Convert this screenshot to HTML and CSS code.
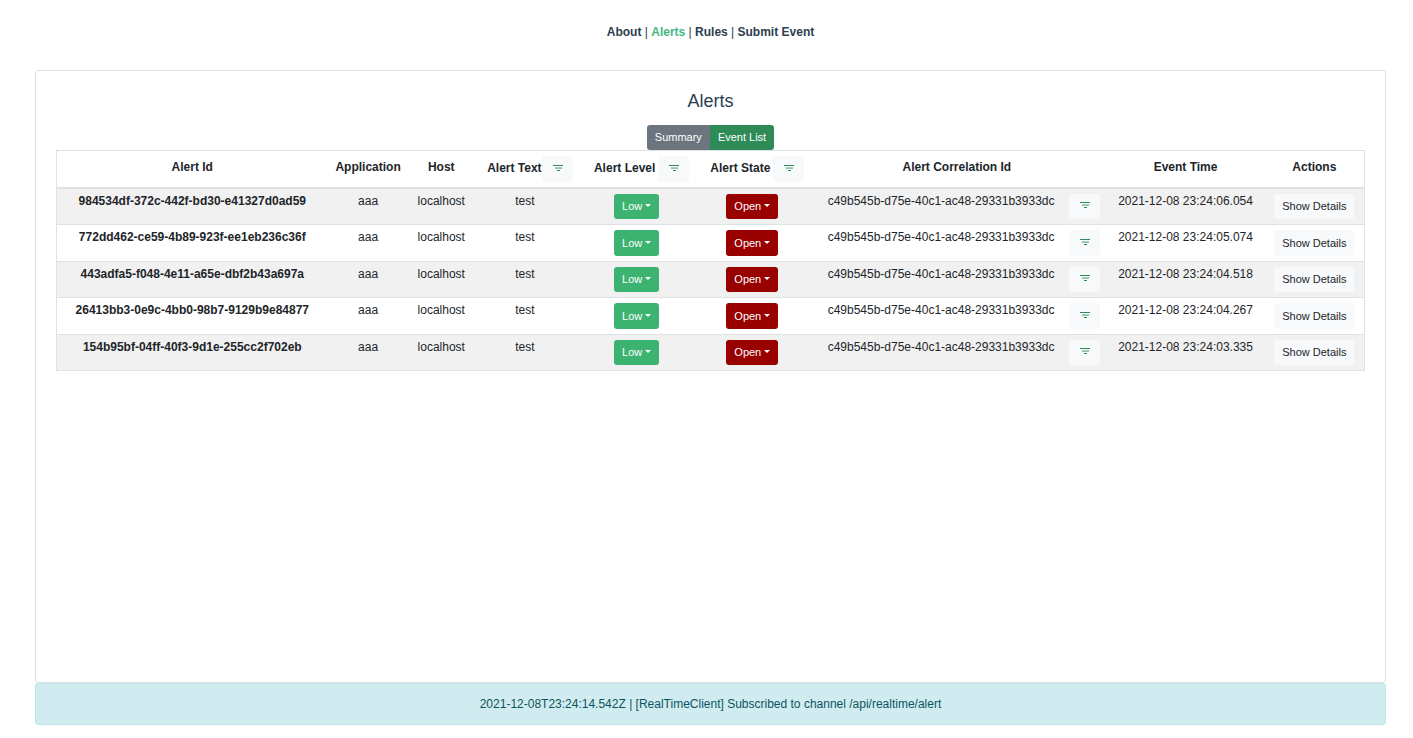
FILE: index.html
```html
<!DOCTYPE html>
<html lang="en">
<head>
<meta charset="utf-8">
<title>Alerts</title>
<link rel="stylesheet" href="styles.css">
</head>
<body>
<svg width="0" height="0" class="defs" aria-hidden="true">
  <symbol id="filter" viewBox="0 0 10 6">
    <path d="M0 0h10v1H0z"/>
    <path d="M2 2h7v1H2z" opacity=".4"/>
    <path d="M2 3h7v1H2z" opacity=".5"/>
    <path d="M4 5h3v1H4z"/>
  </symbol>
</svg>
<nav class="nav">
  <a href="#about">About</a> | <a href="#alerts" class="active">Alerts</a> | <a href="#rules">Rules</a> | <a href="#submit">Submit Event</a>
</nav>
<main class="card">
  <h1 class="title">Alerts</h1>
  <div class="group">
    <button class="btn summary" type="button">Summary</button><button class="btn list" type="button">Event List</button>
  </div>
  <table class="alerts">
    <colgroup>
      <col class="c-id"><col class="c-app"><col class="c-host"><col class="c-text"><col class="c-level"><col class="c-state"><col class="c-corr"><col class="c-time"><col class="c-act">
    </colgroup>
    <thead>
      <tr>
        <th scope="col">Alert Id</th>
        <th scope="col">Application</th>
        <th scope="col">Host</th>
        <th scope="col"><div class="filtered tight">Alert Text<button class="btn light" type="button" aria-label="Filter by text"><svg class="icon"><use href="#filter"/></svg></button></div></th>
        <th scope="col"><div class="filtered">Alert Level<button class="btn light" type="button" aria-label="Filter by level"><svg class="icon"><use href="#filter"/></svg></button></div></th>
        <th scope="col"><div class="filtered">Alert State<button class="btn light" type="button" aria-label="Filter by state"><svg class="icon"><use href="#filter"/></svg></button></div></th>
        <th scope="col">Alert Correlation Id</th>
        <th scope="col">Event Time</th>
        <th scope="col">Actions</th>
      </tr>
    </thead>
    <tbody>
      <tr>
        <th scope="row">984534df-372c-442f-bd30-e41327d0ad59</th><td>aaa</td><td>localhost</td><td>test</td>
        <td><button class="btn low" type="button">Low</button></td>
        <td><button class="btn open" type="button">Open</button></td>
        <td><div class="corr">c49b545b-d75e-40c1-ac48-29331b3933dc<button class="btn light" type="button" aria-label="Filter by correlation id"><svg class="icon"><use href="#filter"/></svg></button></div></td>
        <td>2021-12-08 23:24:06.054</td>
        <td><button class="btn light details" type="button">Show Details</button></td>
      </tr>
      <tr>
        <th scope="row">772dd462-ce59-4b89-923f-ee1eb236c36f</th><td>aaa</td><td>localhost</td><td>test</td>
        <td><button class="btn low" type="button">Low</button></td>
        <td><button class="btn open" type="button">Open</button></td>
        <td><div class="corr">c49b545b-d75e-40c1-ac48-29331b3933dc<button class="btn light" type="button" aria-label="Filter by correlation id"><svg class="icon"><use href="#filter"/></svg></button></div></td>
        <td>2021-12-08 23:24:05.074</td>
        <td><button class="btn light details" type="button">Show Details</button></td>
      </tr>
      <tr>
        <th scope="row">443adfa5-f048-4e11-a65e-dbf2b43a697a</th><td>aaa</td><td>localhost</td><td>test</td>
        <td><button class="btn low" type="button">Low</button></td>
        <td><button class="btn open" type="button">Open</button></td>
        <td><div class="corr">c49b545b-d75e-40c1-ac48-29331b3933dc<button class="btn light" type="button" aria-label="Filter by correlation id"><svg class="icon"><use href="#filter"/></svg></button></div></td>
        <td>2021-12-08 23:24:04.518</td>
        <td><button class="btn light details" type="button">Show Details</button></td>
      </tr>
      <tr>
        <th scope="row">26413bb3-0e9c-4bb0-98b7-9129b9e84877</th><td>aaa</td><td>localhost</td><td>test</td>
        <td><button class="btn low" type="button">Low</button></td>
        <td><button class="btn open" type="button">Open</button></td>
        <td><div class="corr">c49b545b-d75e-40c1-ac48-29331b3933dc<button class="btn light" type="button" aria-label="Filter by correlation id"><svg class="icon"><use href="#filter"/></svg></button></div></td>
        <td>2021-12-08 23:24:04.267</td>
        <td><button class="btn light details" type="button">Show Details</button></td>
      </tr>
      <tr>
        <th scope="row">154b95bf-04ff-40f3-9d1e-255cc2f702eb</th><td>aaa</td><td>localhost</td><td>test</td>
        <td><button class="btn low" type="button">Low</button></td>
        <td><button class="btn open" type="button">Open</button></td>
        <td><div class="corr">c49b545b-d75e-40c1-ac48-29331b3933dc<button class="btn light" type="button" aria-label="Filter by correlation id"><svg class="icon"><use href="#filter"/></svg></button></div></td>
        <td>2021-12-08 23:24:03.335</td>
        <td><button class="btn light details" type="button">Show Details</button></td>
      </tr>
    </tbody>
  </table>
</main>
<div class="status" role="status">2021-12-08T23:24:14.542Z | [RealTimeClient] Subscribed to channel /api/realtime/alert</div>
</body>
</html>
```
FILE: styles.css
```css
* { box-sizing: border-box; }
body {
  display: flex;
  flex-direction: column;
  min-height: 100vh;
  margin: 0;
  padding: 0 27px 13px 35px;
  background: #fff;
  color: #2c3e50;
  font-family: "Liberation Sans", Arial, sans-serif;
  font-size: 12px;
  line-height: 18px;
  text-align: center;
}
.defs { display: none; }
.nav { padding: 23px 0 29px; }
.nav a { color: #2c3e50; font-weight: bold; text-decoration: none; }
.nav .active { color: #42b983; }
.card {
  flex: 1;
  padding: 19px 20px;
  border: 1px solid #dfdfdf;
  border-radius: 3px;
}
.title {
  margin: 0 0 13px;
  font-size: 18px;
  font-weight: normal;
  line-height: 22px;
}
.group { display: flex; justify-content: center; }
.btn {
  height: 25px;
  padding: 0 9px;
  border: 0;
  border-radius: 3px;
  color: #fff;
  font-family: inherit;
  font-size: 11px;
  line-height: 15px;
  white-space: nowrap;
  vertical-align: top;
}
.summary { padding: 0 8px; border-radius: 3px 0 0 3px; background: #6c757d; }
.list { padding: 0 8px; border-radius: 0 3px 3px 0; background: #2e8b57; }
.light { background: #f8f9fa; color: #212529; }
.low { background: #3cb371; }
.open { background: #990000; }
.low, .open { padding: 0 8px; }
.low::after, .open::after {
  content: "";
  display: inline-block;
  margin-left: 3px;
  border: 3px solid transparent;
  border-top-color: #fff;
  border-bottom: 0;
  vertical-align: 3px;
}
.details { padding: 0 8px; }
.icon { display: block; width: 10px; height: 6px; fill: #2e8b57; }
.alerts {
  width: 100%;
  table-layout: fixed;
  border: 1px solid #dee2e6;
  border-bottom: 0;
  border-spacing: 0;
  color: #212529;
  white-space: nowrap;
}
.alerts th, .alerts td {
  padding: 5px 0;
  border-bottom: 1px solid #dee2e6;
  line-height: 14px;
  vertical-align: top;
}
.alerts thead th {
  border-bottom-width: 2px;
  line-height: 22px;
}
.alerts tbody tr:nth-child(odd) { background: #f1f1f1; }
.alerts tbody tr:nth-child(even) .btn { height: 26px; }
.filtered {
  display: flex;
  justify-content: center;
  gap: 3px;
  padding-left: 10px;
  line-height: 24px;
}
.tight { gap: 0; }
.filtered .btn, .corr .btn { width: 31px; padding: 0 10px 3px 11px; }
.filtered .btn { height: 26px; }
.corr { display: flex; justify-content: flex-end; gap: 15px; padding-right: 6px; }
.c-id { width: 20.7%; }
.c-app { width: 6.2%; }
.c-host { width: 5%; }
.c-text { width: 7.8%; }
.c-level { width: 9.3%; }
.c-state { width: 8.4%; }
.c-corr { width: 22.9%; }
.c-time { width: 12.1%; }
.c-act { width: 7.6%; }
.status {
  padding: 11px 12px;
  border: 1px solid #bee5eb;
  border-radius: 3px;
  background: #d1ecf1;
  color: #0c5460;
}
```
